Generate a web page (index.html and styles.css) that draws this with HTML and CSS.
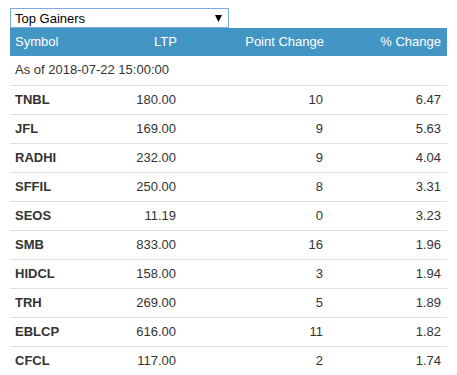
FILE: index.html
```html
<!DOCTYPE html>
<html>
<head>
<meta charset="utf-8">
<link rel="stylesheet" href="styles.css">
</head>
<body>
<div class="page">
  <div class="picker">
    <select class="picker-select">
      <option>Top Gainers</option>
      <option>Top Losers</option>
    </select>
    <svg class="picker-arrow" width="7" height="7" viewBox="0 0 7 7"><polygon points="0,0 7,0 3.5,7" fill="#000"/></svg>
  </div>
  <table class="movers">
    <colgroup>
      <col class="c-sym"><col class="c-ltp"><col class="c-pt"><col class="c-pct">
    </colgroup>
    <thead>
      <tr><th class="left">Symbol</th><th>LTP</th><th>Point Change</th><th>% Change</th></tr>
    </thead>
    <tbody>
      <tr class="asof"><td colspan="4" class="left">As of 2018-07-22 15:00:00</td></tr>
      <tr><td class="sym">TNBL</td><td>180.00</td><td>10</td><td>6.47</td></tr>
      <tr><td class="sym">JFL</td><td>169.00</td><td>9</td><td>5.63</td></tr>
      <tr><td class="sym">RADHI</td><td>232.00</td><td>9</td><td>4.04</td></tr>
      <tr><td class="sym">SFFIL</td><td>250.00</td><td>8</td><td>3.31</td></tr>
      <tr><td class="sym">SEOS</td><td>11.19</td><td>0</td><td>3.23</td></tr>
      <tr><td class="sym">SMB</td><td>833.00</td><td>16</td><td>1.96</td></tr>
      <tr><td class="sym">HIDCL</td><td>158.00</td><td>3</td><td>1.94</td></tr>
      <tr><td class="sym">TRH</td><td>269.00</td><td>5</td><td>1.89</td></tr>
      <tr><td class="sym">EBLCP</td><td>616.00</td><td>11</td><td>1.82</td></tr>
      <tr><td class="sym">CFCL</td><td>117.00</td><td>2</td><td>1.74</td></tr>
    </tbody>
  </table>
</div>
</body>
</html>
```
FILE: styles.css
```css
html, body {
  margin: 0;
  padding: 0;
  background: #fff;
}
body {
  font-family: "Liberation Sans", Arial, sans-serif;
  font-size: 13px;
  color: #333;
}
.page {
  padding: 8px 10px 0;
  width: 437px;
}
.picker {
  position: relative;
  width: 219px;
  height: 20px;
  box-sizing: border-box;
  border: 1px solid #7ba9e0;
}
.picker-select {
  -webkit-appearance: none;
  appearance: none;
  display: block;
  width: 100%;
  height: 100%;
  border: 0;
  margin: 0;
  padding: 0 0 0 4px;
  background: #fff;
  font-family: "Liberation Sans", Arial, sans-serif;
  font-size: 13px;
  color: #000;
  outline: none;
}
.picker-arrow {
  position: absolute;
  right: 6px;
  top: 6px;
  pointer-events: none;
}
.movers {
  width: 437px;
  border-collapse: collapse;
  table-layout: fixed;
}
.c-sym { width: 86px; }
.c-ltp { width: 86px; }
.c-pt { width: 147px; }
.c-pct { width: 118px; }
.movers th {
  background: #4396c4;
  color: #fff;
  font-weight: normal;
  text-align: right;
  padding: 4px 5px;
  line-height: 20px;
  border: 0;
}
.movers td {
  text-align: right;
  padding: 4px 6px 4px 5px;
  line-height: 20px;
  border-top: 1px solid #ddd;
}
.movers th:last-child { padding-right: 6px; }
.movers .left { text-align: left; }
.movers .asof td {
  border-top: 0;
  padding: 4px 5px 5px;
}
.movers .sym {
  text-align: left;
  font-weight: bold;
  color: #333;
}
```
